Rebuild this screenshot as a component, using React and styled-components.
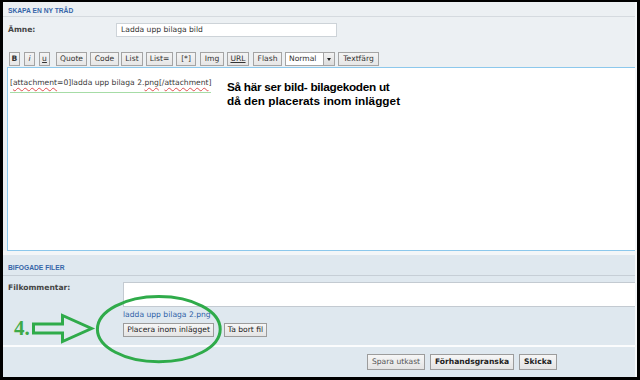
import React from 'react';
import styled, { createGlobalStyle } from 'styled-components';

const Global = createGlobalStyle`
  html, body { margin: 0; padding: 0; background: #000; }
  body { font-family: "DejaVu Sans", Verdana, sans-serif; }
`;

const UI_FONT = `"DejaVu Sans", Verdana, sans-serif`;
const HEAD_FONT = `"Liberation Sans", Arial, sans-serif`;

const Frame = styled.div`
  position: relative;
  width: 632px;
  height: 375px;
  margin: 2px 0 0 3px;
  border-right: 2px solid #f4f7f9;
  overflow: hidden;
  display: flex;
  flex-direction: column;
`;

const TopPanel = styled.section`
  background: #ecf0f3;
  display: flex;
  flex-direction: column;
`;

const SectionHead = styled.div`
  height: ${(p) => p.h}px;
  box-sizing: border-box;
  padding: ${(p) => p.pt}px 0 0 5px;
  border-bottom: 1px solid ${(p) => p.line};
  font: bold 6.7px/8px ${HEAD_FONT};
  color: #3565a8;
`;

const FieldRow = styled.div`
  display: flex;
  align-items: ${(p) => p.align || 'center'};
  padding: 6px 0 0 5px;
`;

const Label = styled.div`
  flex: none;
  width: ${(p) => p.w}px;
  padding-top: ${(p) => p.pt || 0}px;
  font: bold 7.6px/10px ${UI_FONT};
  color: #454545;
`;

const SubjectInput = styled.div`
  width: 221px;
  height: 14px;
  box-sizing: border-box;
  border: 1px solid #cdd3d8;
  background: #fff;
  padding-left: 4px;
  font: 7.6px/12px ${UI_FONT};
  color: #333;
`;

const Toolbar = styled.div`
  display: flex;
  margin-top: 15px;
  padding-left: 6px;
  height: 14px;
`;

const ToolButton = styled.div`
  flex: none;
  margin-left: ${(p) => p.ml || 0}px;
  width: ${(p) => p.w}px;
  height: 14px;
  box-sizing: border-box;
  border: 1px solid #a4a4a4;
  background: linear-gradient(#f4f4f4, #e6e6e6);
  display: flex;
  align-items: center;
  justify-content: center;
  font: ${(p) => (p.bold ? 'bold ' : '')}${(p) => (p.italic ? 'italic ' : '')}7.6px/10px ${UI_FONT};
  text-decoration: ${(p) => (p.under ? 'underline' : 'none')};
  color: #333;
`;

const Select = styled.div`
  flex: none;
  margin-left: 3px;
  width: 50px;
  height: 14px;
  box-sizing: border-box;
  border: 1px solid #a4a4a4;
  background: #fff;
  display: flex;
  align-items: center;
  padding-left: 3px;
  font: 7.6px/10px ${UI_FONT};
  color: #333;
`;

const SelectArrow = styled.span`
  margin-left: auto;
  width: 11px;
  height: 12px;
  box-sizing: border-box;
  border-left: 1px solid #a4a4a4;
  background: linear-gradient(#f2f2f2, #dcdcdc);
  display: flex;
  align-items: center;
  justify-content: center;
  &::after {
    content: '';
    border-left: 2.5px solid transparent;
    border-right: 2.5px solid transparent;
    border-top: 3px solid #222;
  }
`;

const Editor = styled.div`
  position: relative;
  margin: 1px 0 0 4px;
  width: 640px;
  height: 184px;
  box-sizing: border-box;
  border: 1px solid #8cc8ec;
  background: #fff;
  padding: 2px 0 0 2px;
`;

const Code = styled.span`
  display: inline-block;
  font: 7.6px/10px ${UI_FONT};
  color: #3a3a3a;
  padding-bottom: 3.5px;
  border-bottom: 1.5px solid #a6dca6;
`;

const Misspelled = styled.span`
  text-decoration: underline wavy #e05050;
  text-decoration-thickness: 1px;
  text-underline-offset: 1.5px;
`;

const Annotation = styled.div`
  position: absolute;
  left: 219px;
  top: 11.5px;
  font: bold 11.8px/14px ${HEAD_FONT};
  color: #000;
  white-space: nowrap;
`;

const AnnotationLine = styled.div`
  letter-spacing: ${(p) => p.ls || 0}px;
`;

const Strip = styled.div`
  height: 4px;
  background: #f3f6f8;
`;

const FilesPanel = styled.section`
  background: #dfe8ef;
  display: flex;
  flex-direction: column;
  padding-bottom: 8px;
  border-bottom: 2px solid #fbfcfd;
`;

const CommentBox = styled.div`
  flex: none;
  width: 600px;
  height: 25px;
  box-sizing: border-box;
  border: 1px solid #c3cad1;
  background: #fff;
`;

const Attachment = styled.div`
  display: flex;
  flex-direction: column;
  align-items: flex-start;
  margin-left: 120px;
`;

const FileLink = styled.a`
  margin-top: 3px;
  font: 7.6px/10px ${UI_FONT};
  color: #2f62a8;
  text-decoration: none;
`;

const ButtonRow = styled.div`
  display: flex;
  gap: ${(p) => p.gap}px;
  margin-top: ${(p) => p.mt || 0}px;
`;

const Button = styled.div`
  flex: none;
  width: ${(p) => p.w}px;
  height: ${(p) => p.h || 14}px;
  box-sizing: border-box;
  border: 1px solid #9c9c9c;
  background: linear-gradient(#f6f6f6, #e4e4e4);
  display: flex;
  align-items: center;
  justify-content: center;
  font: ${(p) => (p.bold ? 'bold ' : '')}7.6px/10px ${UI_FONT};
  color: ${(p) => (p.muted ? '#555' : '#222')};
`;

const ActionBar = styled.div`
  flex: 1;
  background: #dfe8ef;
  padding: 7px 0 0 364px;
`;

const Overlay = styled.svg`
  position: absolute;
  left: -3px;
  top: -2px;
  pointer-events: none;
`;

const StepNumber = styled.div`
  position: absolute;
  left: 11px;
  top: 316px;
  font: bold 21px/21px "Liberation Serif", "Times New Roman", serif;
  color: #3faa48;
`;

const toolbarButtons = [
  { t: 'B', w: 11, ml: 0, bold: true },
  { t: 'i', w: 11, ml: 4, italic: true },
  { t: 'u', w: 11, ml: 4, under: true },
  { t: 'Quote', w: 31, ml: 6 },
  { t: 'Code', w: 29, ml: 3 },
  { t: 'List', w: 22, ml: 2 },
  { t: 'List=', w: 27, ml: 3 },
  { t: '[*]', w: 20, ml: 3 },
  { t: 'Img', w: 24, ml: 4 },
  { t: 'URL', w: 22, ml: 3, under: true },
  { t: 'Flash', w: 29, ml: 4 },
];

export default function App() {
  return (
    <>
      <Global />
      <Frame>
        <TopPanel>
          <SectionHead h={15} pt={5} line="#d5dadf">SKAPA EN NY TRÅD</SectionHead>
          <FieldRow>
            <Label w={108}>Ämne:</Label>
            <SubjectInput>Ladda upp bilaga bild</SubjectInput>
          </FieldRow>
          <Toolbar>
            {toolbarButtons.map((b) => (
              <ToolButton key={b.t} w={b.w} ml={b.ml} bold={b.bold} italic={b.italic} under={b.under}>
                {b.t}
              </ToolButton>
            ))}
            <Select>
              Normal
              <SelectArrow />
            </Select>
            <ToolButton w={41} ml={3}>Textfärg</ToolButton>
          </Toolbar>
          <Editor>
            <Code>
              [<Misspelled>attachment</Misspelled>=0]ladda upp bilaga 2.<Misspelled>png</Misspelled>[/<Misspelled>attachment</Misspelled>]
            </Code>
            <Annotation>
              <AnnotationLine ls={-0.3}>Så här ser bild- bilagekoden ut</AnnotationLine>
              <AnnotationLine>då den placerats inom inlägget</AnnotationLine>
            </Annotation>
          </Editor>
          <Strip />
        </TopPanel>
        <FilesPanel>
          <SectionHead h={21} pt={9} line="#c6ced6">BIFOGADE FILER</SectionHead>
          <FieldRow align="flex-start">
            <Label w={115} pt={1}>Filkommentar:</Label>
            <CommentBox />
          </FieldRow>
          <Attachment>
            <FileLink href="#">ladda upp bilaga 2.png</FileLink>
            <ButtonRow gap={10} mt={3}>
              <Button w={91}>Placera inom inlägget</Button>
              <Button w={43}>Ta bort fil</Button>
            </ButtonRow>
          </Attachment>
        </FilesPanel>
        <ActionBar>
          <ButtonRow gap={5}>
            <Button w={58} h={16} muted>Spara utkast</Button>
            <Button w={84} h={16} bold>Förhandsgranska</Button>
            <Button w={38} h={16} bold>Skicka</Button>
          </ButtonRow>
        </ActionBar>
        <Overlay width="640" height="380" viewBox="0 0 640 380">
          <polygon
            points="33.5,324 62.5,324 62.5,315.5 91.5,328.5 62.5,341.5 62.5,333 33.5,333"
            fill="none"
            stroke="#2fab4a"
            strokeWidth="3"
            strokeLinejoin="miter"
          />
          <ellipse cx="158.8" cy="329.2" rx="61.4" ry="32.6" fill="none" stroke="#2fab4a" strokeWidth="3" />
        </Overlay>
        <StepNumber>4.</StepNumber>
      </Frame>
    </>
  );
}
